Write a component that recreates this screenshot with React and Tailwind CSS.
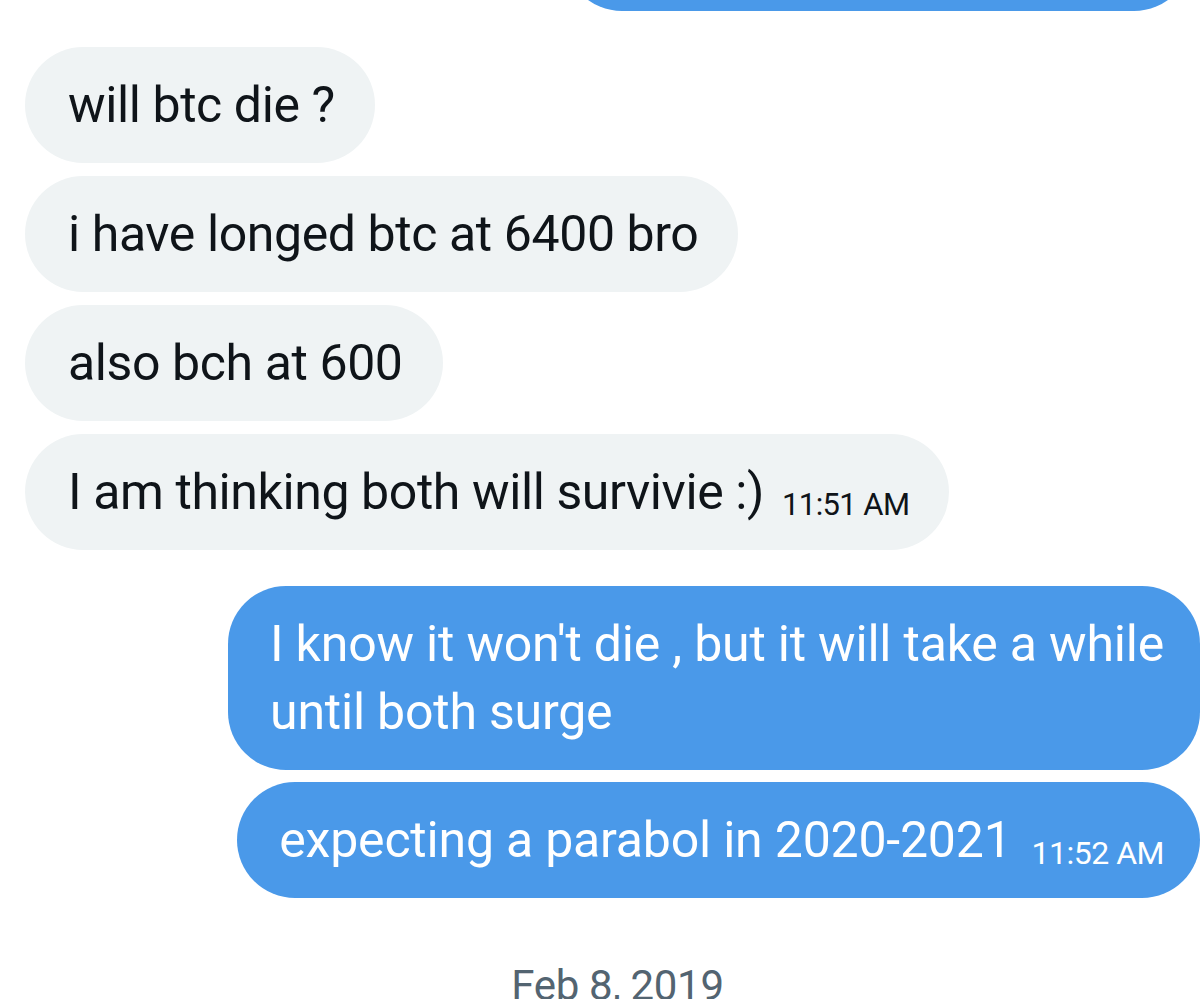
export default function App() {
  const font = { fontFamily: 'Roboto, "Liberation Sans", sans-serif' };
  return (
    <div className="w-[1200px] h-[999px] overflow-hidden bg-white" style={font}>
      <div className="flex flex-col items-start pl-[25px]">
        <div className="self-end w-[628px] h-[116px] mt-[-105px] mr-[8px] rounded-[58px] bg-[#4a99e9]" />
        <div className="mt-[36px] flex flex-col items-start gap-[13px]">
          <Gray>will btc die ?</Gray>
          <Gray>i have longed btc at 6400 bro</Gray>
          <Gray>also bch at 600</Gray>
          <Gray time="11:51 AM">I am thinking both will survivie :)</Gray>
        </div>
        <div className="mt-[36px] self-stretch flex flex-col items-end gap-[12px]">
          <Blue>
            I know it won't die , but it will take a while
            <br />
            until both surge
          </Blue>
          <Blue time="11:52 AM">expecting a parabol in 2020-2021</Blue>
        </div>
        <div className="self-stretch flex justify-center mt-[58px] pl-[10px]">
          <span className="text-[42px] leading-[60px] tracking-[-0.3px] text-[#536471]">Feb 8, 2019</span>
        </div>
      </div>
    </div>
  );
}

function Gray({ children, time }) {
  return (
    <div className="flex items-end rounded-[58px] bg-[#eff3f4] pl-[43px] pr-[40px] py-[24px] text-[#0f1419]">
      <span className="text-[50px] leading-[68px] tracking-[-0.4px]">{children}</span>
      {time && (
        <span className="ml-[18px] mb-[1px] text-[31px] leading-[40px] tracking-[-0.6px]">{time}</span>
      )}
    </div>
  );
}

function Blue({ children, time }) {
  return (
    <div className="flex items-end rounded-[58px] bg-[#4a99e9] pl-[42px] pr-[36px] py-[24px] text-white">
      <span className="text-[50px] leading-[68px] tracking-[-0.2px]">{children}</span>
      {time && (
        <span className="ml-[20px] mb-[1px] text-[32px] leading-[40px] tracking-[-0.5px]">{time}</span>
      )}
    </div>
  );
}
